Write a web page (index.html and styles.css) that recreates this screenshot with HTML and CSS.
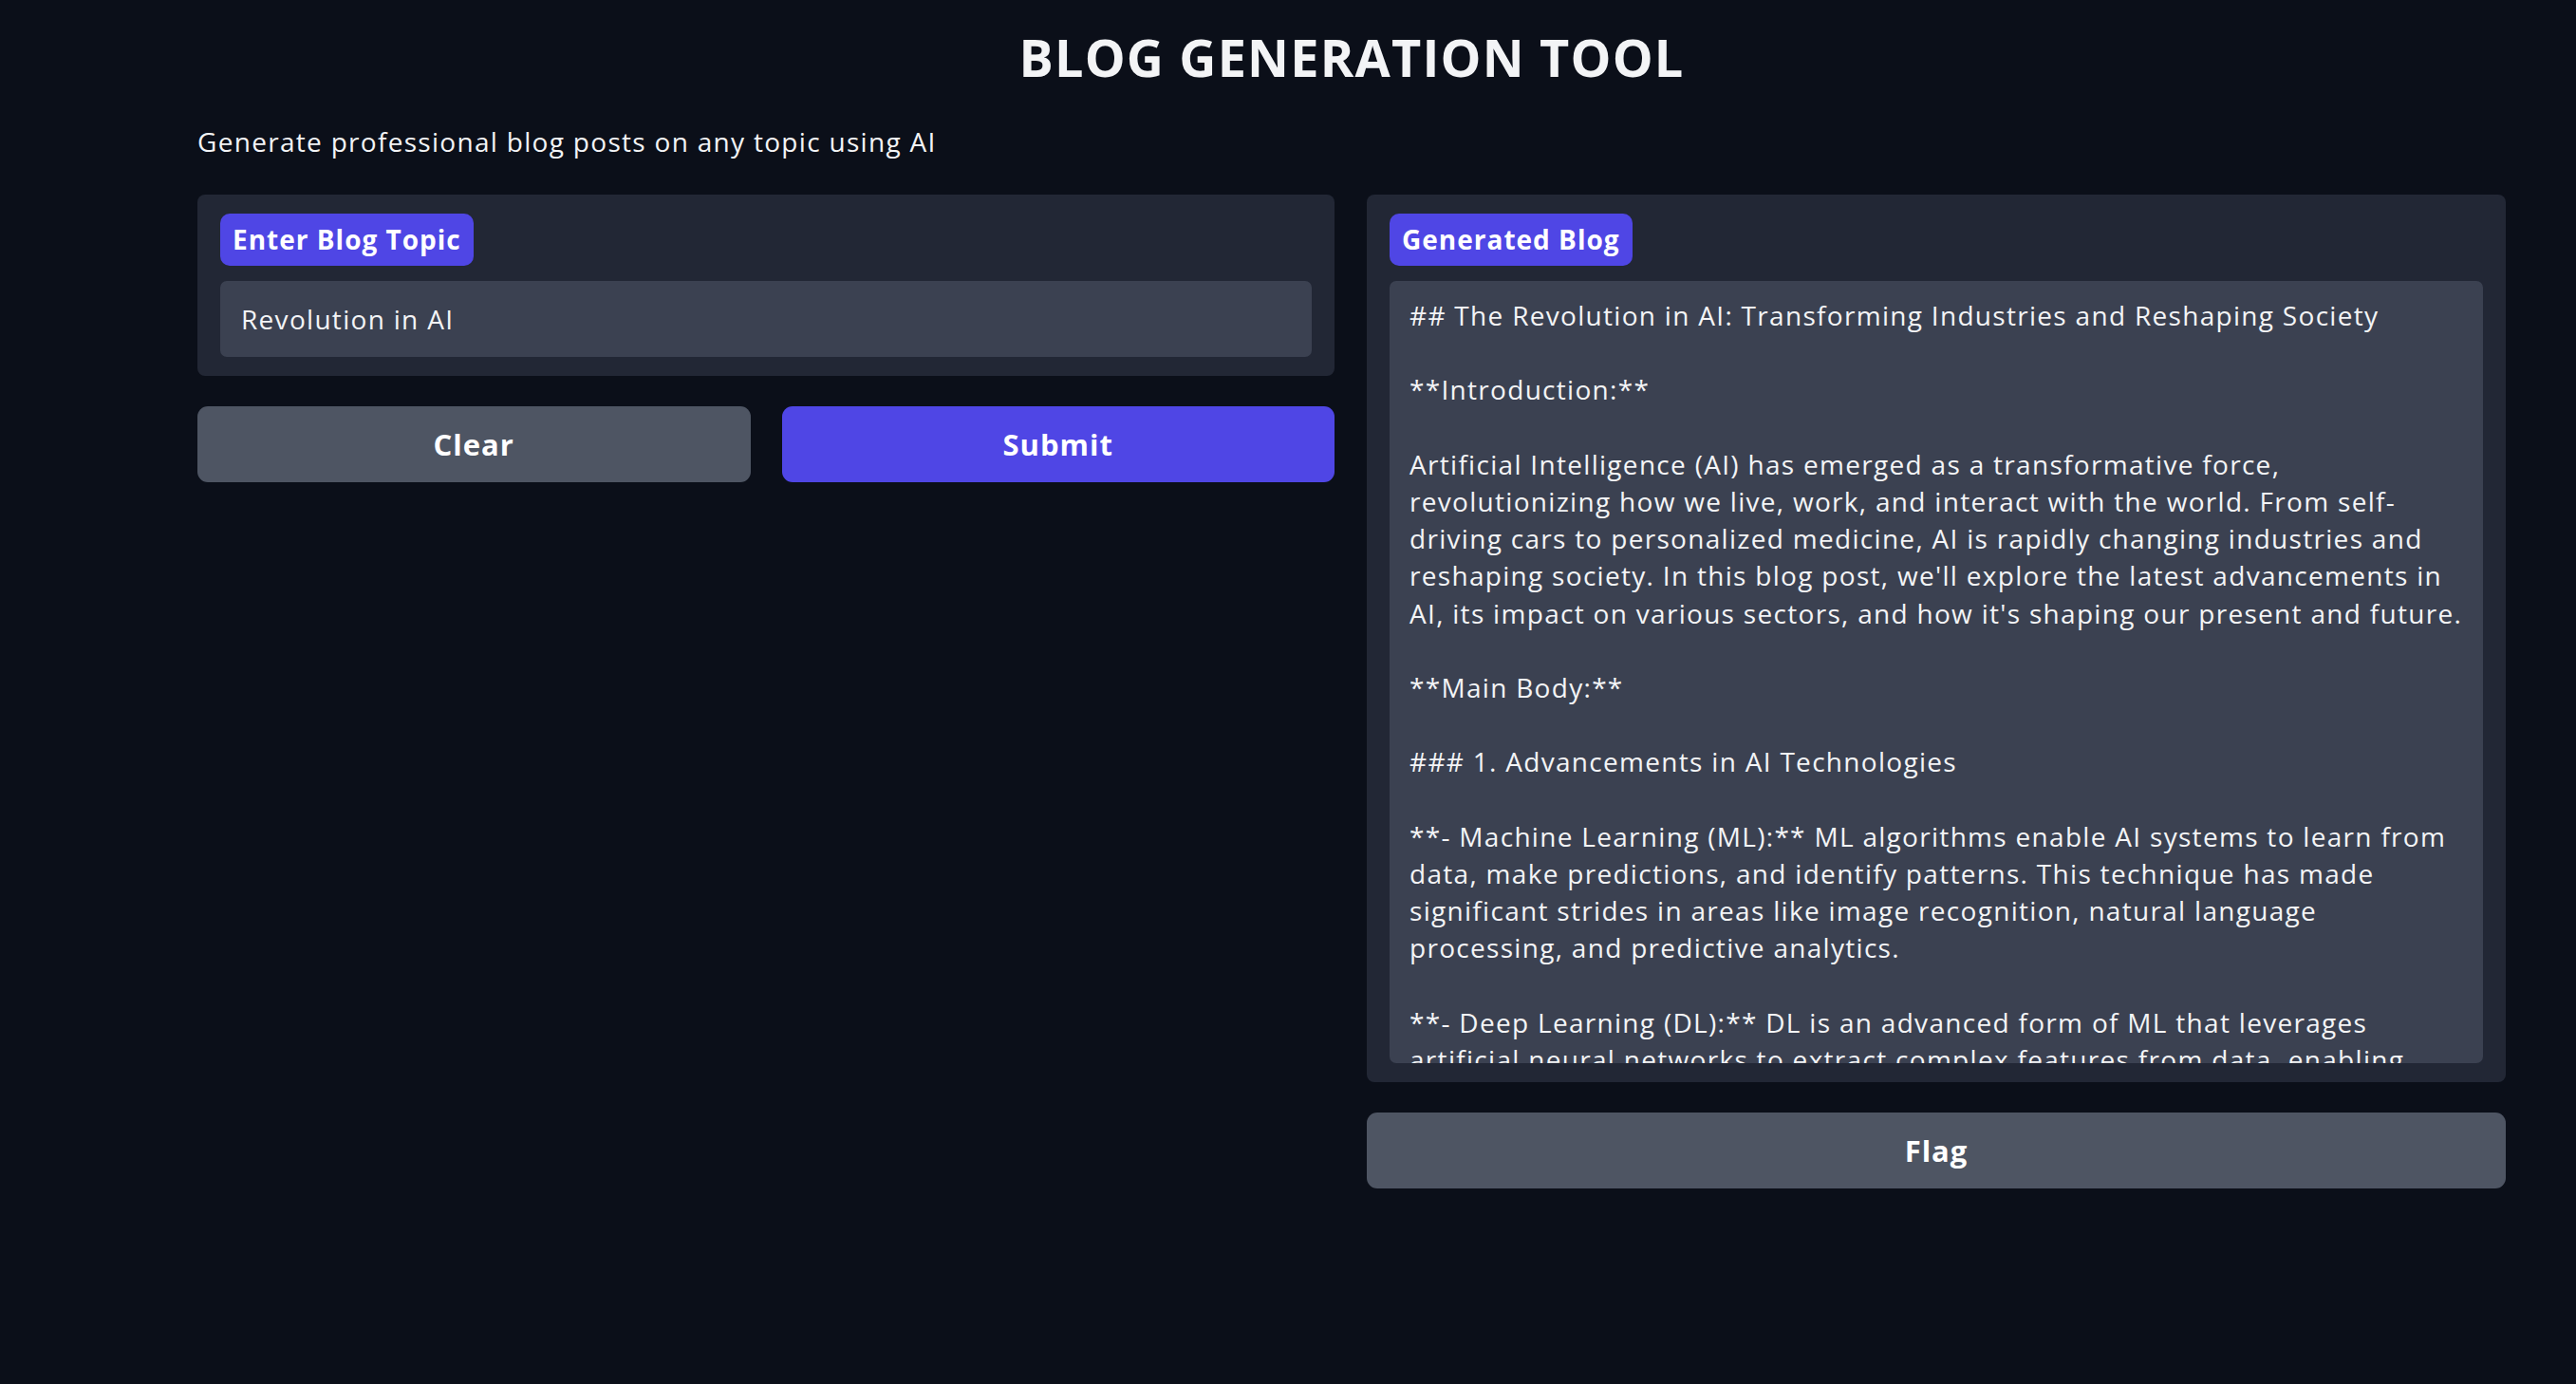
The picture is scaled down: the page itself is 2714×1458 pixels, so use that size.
FILE: index.html
```html
<!DOCTYPE html>
<html lang="en">
<head>
<meta charset="utf-8">
<title>Blog Generation Tool</title>
<link rel="stylesheet" href="styles.css">
</head>
<body>
<main class="app">
  <header class="header">
    <h1 class="title">BLOG GENERATION TOOL</h1>
    <p class="subtitle">Generate professional blog posts on any topic using AI</p>
  </header>
  <section class="columns">
    <div class="col">
      <div class="panel">
        <span class="label">Enter Blog Topic</span>
        <div class="input">Revolution in AI</div>
      </div>
      <div class="btn-row">
        <button class="btn btn-secondary">Clear</button>
        <button class="btn btn-primary">Submit</button>
      </div>
    </div>
    <div class="col">
      <div class="panel">
        <span class="label">Generated Blog</span>
        <div class="output">## The Revolution in AI: Transforming Industries and Reshaping Society

**Introduction:**

Artificial Intelligence (AI) has emerged as a transformative force,
revolutionizing how we live, work, and interact with the world. From self-
driving cars to personalized medicine, AI is rapidly changing industries and
reshaping society. In this blog post, we'll explore the latest advancements in
AI, its impact on various sectors, and how it's shaping our present and future.

**Main Body:**

### 1. Advancements in AI Technologies

**- Machine Learning (ML):** ML algorithms enable AI systems to learn from
data, make predictions, and identify patterns. This technique has made
significant strides in areas like image recognition, natural language
processing, and predictive analytics.

**- Deep Learning (DL):** DL is an advanced form of ML that leverages
artificial neural networks to extract complex features from data, enabling</div>
      </div>
      <button class="btn btn-secondary btn-flag">Flag</button>
    </div>
  </section>
</main>
</body>
</html>
```
FILE: styles.css
```css
html, body {
  margin: 0;
  padding: 0;
  background: #0b0f19;
}

body {
  font-family: "Open Sans", "Liberation Sans", sans-serif;
  color: #f3f4f6;
}

.app {
  box-sizing: border-box;
  width: 2432px;
  margin-left: 208px;
}

.header {
  padding-top: 34px;
}

.title {
  margin: 0;
  text-align: center;
  font-size: 54px;
  line-height: 53px;
  font-weight: 700;
  letter-spacing: 1.2px;
  color: #f3f4f6;
}

.subtitle {
  margin: 43px 0 0 0;
  font-size: 28px;
  line-height: 39px;
  font-weight: 400;
  letter-spacing: 1.3px;
  color: #f3f4f6;
}

.columns {
  margin-top: 36px;
  display: grid;
  grid-template-columns: 1198px 1200px;
  column-gap: 34px;
  align-items: start;
}

.col {
  display: flex;
  flex-direction: column;
  gap: 32px;
}

.panel {
  background: #222735;
  border-radius: 8px;
  padding: 20px 24px;
  display: flex;
  flex-direction: column;
  align-items: flex-start;
  gap: 16px;
}

.label {
  display: inline-block;
  height: 55px;
  line-height: 55px;
  padding: 0 13px;
  background: #4f46e5;
  color: #ffffff;
  font-size: 28px;
  font-weight: 700;
  letter-spacing: 1px;
  border-radius: 10px;
  white-space: nowrap;
}

.input {
  box-sizing: border-box;
  align-self: stretch;
  height: 80px;
  line-height: 80px;
  padding: 0 22px;
  background: #3b4151;
  border-radius: 7px;
  font-size: 28px;
  letter-spacing: 1.3px;
  color: #f3f4f6;
}

.output {
  box-sizing: border-box;
  align-self: stretch;
  height: 824px;
  overflow: hidden;
  padding: 17px 21px;
  background: #3b4151;
  border-radius: 7px;
  font-size: 28px;
  line-height: 39.2px;
  letter-spacing: 1.3px;
  white-space: pre;
  color: #f3f4f6;
}

.btn-row {
  display: grid;
  grid-template-columns: 1fr 1fr;
  column-gap: 33px;
}

.btn {
  height: 80px;
  border: none;
  border-radius: 11px;
  font-family: "Open Sans", "Liberation Sans", sans-serif;
  font-size: 31px;
  font-weight: 700;
  letter-spacing: 1px;
  color: #ffffff;
  cursor: pointer;
}

.btn-secondary {
  background: #4e5563;
}

.btn-primary {
  background: #4f46e5;
}

.btn-flag {
  width: 100%;
}
```
